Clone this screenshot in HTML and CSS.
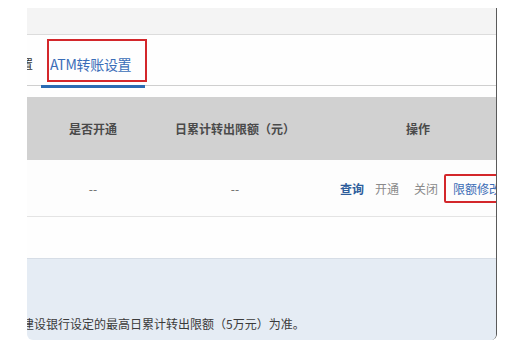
FILE: index.html
```html
<!DOCTYPE html>
<html lang="zh-CN">
  <head>
    <meta charset="UTF-8" />
    <title>ATM转账设置</title>
    <link rel="stylesheet" href="styles.css">
  </head>
  <body>
    <div class="card">
      <div class="topbar"></div>
      <div class="tabs">
        <div class="tab_prev">置</div>
        <div class="tab_active">
          <div class="mark">ATM转账设置</div>
        </div>
      </div>
      <div class="table">
        <div class="thead">
          <div class="cell">是否开通</div>
          <div class="cell">日累计转出限额（元）</div>
          <div class="cell">操作</div>
        </div>
        <div class="trow">
          <div class="cell">--</div>
          <div class="cell">--</div>
          <div class="cell ops">
            <span class="op query">查询</span>
            <span class="op off">开通</span>
            <span class="op off close">关闭</span>
            <span class="op edit">限额修改</span>
          </div>
        </div>
      </div>
      <div class="notice">
        <p>建设银行设定的最高日累计转出限额（5万元）为准。</p>
      </div>
    </div>
  </body>
</html>
```

FILE: styles.css
```css
* {
  margin: 0;
  padding: 0;
  box-sizing: border-box;
}
body {
  background-color: #fff;
  font-family: "Noto Sans CJK SC", "Liberation Sans", sans-serif;
  font-size: 12px;
  color: #333;
}
.card {
  width: 470px;
  height: 332px;
  margin: 8px 0 0 27px;
  background-color: #fefefe;
  border-right: 1px solid #5a5a5a;
  border-radius: 0 0 6px 6px;
  overflow: hidden;
}
.topbar {
  height: 27px;
  background-color: #f4f4f4;
  border-bottom: 1px solid #dcdcdc;
}
.tabs {
  display: flex;
  height: 51px;
  border-bottom: 1px solid #cfcfcf;
}
.tab_prev {
  align-self: center;
  width: 12px;
  margin-top: 6px;
  margin-left: -6px;
  font-size: 12px;
  color: #333;
}
.tab_active {
  height: 53px;
  width: 104px;
  margin-left: 8px;
  padding: 4px 0 0 6px;
  border-bottom: 3px solid #2a6bb3;
}
.mark {
  display: flex;
  align-items: center;
  width: 100px;
  height: 43px;
  padding: 6px 0 0 1px;
  border: 2px solid #d3272b;
  font-size: 14px;
  letter-spacing: -0.3px;
  color: #3a6db8;
  white-space: nowrap;
}
.table {
  width: 498px;
  margin-top: 11px;
}
.thead,
.trow {
  display: grid;
  grid-template-columns: 132px 152px 1fr;
  align-items: center;
}
.thead {
  height: 63px;
  background-color: #d1d1d1;
  color: #4a4a4a;
  font-weight: bold;
}
.trow {
  height: 57px;
  background-color: #fdfdfd;
  border-bottom: 1px solid #e4e4e4;
  color: #666;
}
.cell {
  text-align: center;
  white-space: nowrap;
}
.ops {
  display: flex;
  align-items: center;
  padding-left: 29px;
}
.op {
  margin-right: 11px;
}
.query {
  color: #2e5d9c;
  font-weight: bold;
}
.off {
  color: #8a8a8a;
}
.close {
  margin-left: 4px;
  margin-right: 6px;
}
.edit {
  height: 29px;
  line-height: 25px;
  padding: 0 8px 0 7px;
  border: 2px solid #d3272b;
  border-radius: 2px;
  color: #3b6cb5;
}
.notice {
  height: 82px;
  margin-top: 41px;
  padding-top: 56px;
  background-color: #e5ecf4;
  border-top: 1px solid #d6dde6;
  color: #3a3a3a;
}
.notice p {
  margin-left: -5px;
  white-space: nowrap;
}
```
